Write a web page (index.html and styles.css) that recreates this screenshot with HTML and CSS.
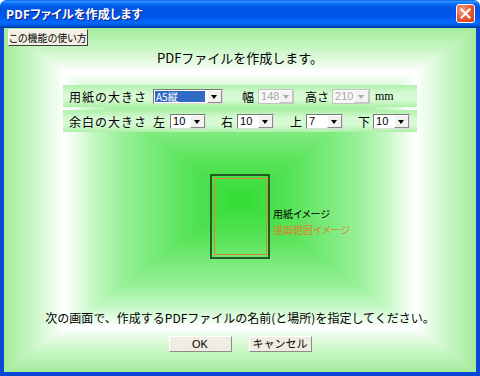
FILE: index.html
```html
<!DOCTYPE html>
<html>

<head>
  <link rel="stylesheet" href="styles.css">
</head>

<body>

  <div class="window">
    <div class="titlebar">
      <span class="title">PDFファイルを作成します</span>
      <span class="close">
        <svg width="11" height="11" viewBox="0 0 11 11">
          <path d="M1.5 1.5 L9.5 9.5 M9.5 1.5 L1.5 9.5" stroke="#fff" stroke-width="2" stroke-linecap="square" />
        </svg>
      </span>
    </div>

    <div class="client">
      <div class="content">
        <button class="help">この機能の使い方</button>
        <p class="heading">PDFファイルを作成します。</p>

        <div class="rows">
          <div class="row">
            <span class="label">用紙の大きさ</span>
            <span class="sel w70"><span class="sel-text picked">A5縦</span><span class="sel-btn"></span></span>
            <span class="key k-wide">幅</span>
            <span class="sel w36 off"><span class="sel-text">148</span><span class="sel-btn"></span></span>
            <span class="key k-high">高さ</span>
            <span class="sel w38 off"><span class="sel-text">210</span><span class="sel-btn"></span></span>
            <span class="unit">mm</span>
          </div>
          <div class="row">
            <span class="label">余白の大きさ</span>
            <span class="key k-first">左</span>
            <span class="sel w36"><span class="sel-text">10</span><span class="sel-btn"></span></span>
            <span class="key">右</span>
            <span class="sel w37"><span class="sel-text">10</span><span class="sel-btn"></span></span>
            <span class="key k-top">上</span>
            <span class="sel w37"><span class="sel-text">7</span><span class="sel-btn"></span></span>
            <span class="key k-last">下</span>
            <span class="sel w37"><span class="sel-text">10</span><span class="sel-btn"></span></span>
          </div>
        </div>

        <div class="preview">
          <div class="paper">
            <div class="area"></div>
          </div>
          <div class="legend">
            <span class="legend-paper">用紙イメージ</span>
            <span class="legend-area">描画範囲イメージ</span>
          </div>
        </div>

        <p class="note">次の画面で、作成するPDFファイルの名前(と場所)を指定してください。</p>

        <div class="actions">
          <button class="btn">OK</button>
          <button class="btn">キャンセル</button>
        </div>
      </div>
    </div>
  </div>

</body>

</html>
```

FILE: styles.css
```css
* {
  box-sizing: border-box;
}

body {
  margin: 0;
  background: #fff;
  font-family: "Noto Sans CJK JP", "Liberation Sans", sans-serif;
  font-size: 12px;
  color: #000;
}

.window {
  width: 480px;
  height: 376px;
  display: flex;
  flex-direction: column;
}

/* title bar */
.titlebar {
  height: 28px;
  display: flex;
  align-items: center;
  justify-content: space-between;
  padding: 0 5px 2px 6px;
  border-radius: 6px 6px 0 0;
  background: linear-gradient(to bottom, #0058ee 0%, #3593ff 5%, #1d83ff 9%, #036ffc 13%, #0262ee 18%, #0057e5 26%, #0054e3 40%, #0055eb 58%, #005bf5 68%, #026afe 78%, #0062ef 87%, #0052d6 93%, #0040ab 97%, #003092 100%);
}

.title {
  color: #fff;
  font-weight: bold;
  font-size: 12px;
  font-feature-settings: "palt";
  letter-spacing: 0.2px;
  text-shadow: 1px 1px #0f1f80;
}

.close {
  width: 19px;
  height: 19px;
  display: flex;
  align-items: center;
  justify-content: center;
  border: 1px solid #fff;
  border-radius: 3px;
  background: radial-gradient(circle at 30% 30%, #f39a7c, #e2532e 60%, #c8401e);
}

/* client area with a box shaped gradient */
.client {
  position: relative;
  flex: 1;
  border: 4px solid #0b48d8;
  border-top: 0;
  background: linear-gradient(to right, #a4ec9c 0%, #c8f6c4 6%, #fff 13%, #c4f8c4 19%, #98f098 25%, #5ce45c 38%, #30dc30 50%, #5ce45c 62%, #98f098 75%, #c4f8c4 81%, #fff 87%, #c8f6c4 94%, #a4ec9c 100%);
}

.client::before {
  content: "";
  position: absolute;
  inset: 0;
  background: linear-gradient(to bottom, #a4ec9c 0%, #c8f6c4 6%, #fff 13%, #c4f8c4 19%, #98f098 25%, #5ce45c 38%, #30dc30 50%, #5ce45c 62%, #98f098 75%, #c4f8c4 81%, #fff 87%, #c8f6c4 94%, #a4ec9c 100%);
  -webkit-mask-image: conic-gradient(from 0deg at 50% 50%, #000 0deg 53.9deg, transparent 53.9deg 126.1deg, #000 126.1deg 233.9deg, transparent 233.9deg 306.1deg, #000 306.1deg);
  mask-image: conic-gradient(from 0deg at 50% 50%, #000 0deg 53.9deg, transparent 53.9deg 126.1deg, #000 126.1deg 233.9deg, transparent 233.9deg 306.1deg, #000 306.1deg);
}

.content {
  position: relative;
  height: 100%;
  display: flex;
  flex-direction: column;
  align-items: center;
}

.help {
  align-self: flex-start;
  margin: 1px 0 0 4px;
  width: 80px;
  height: 17px;
  padding: 0;
  white-space: nowrap;
  font-family: "Noto Sans CJK JP", sans-serif;
  font-size: 10px;
  font-feature-settings: "palt";
  line-height: 14px;
  color: #000;
  background: #f4f1e4;
  border: 1px solid;
  border-color: #fff #404040 #404040 #fff;
}

.heading {
  margin: 4px 0 0;
  font-size: 13px;
  line-height: 16px;
}

/* option rows */
.rows {
  margin-top: 19px;
  width: 354px;
  display: flex;
  flex-direction: column;
  gap: 3px;
}

.row {
  height: 22px;
  display: flex;
  align-items: center;
  padding-left: 6px;
  background: linear-gradient(to bottom, #aef0a8, #d4f9d0 35%, #d8fad6 65%, #aef0a8);
}

.label {
  width: 84px;
  letter-spacing: 1px;
}

.key {
  margin: 0 4px 0 15px;
}

.k-wide {
  margin-left: 19px;
}

.k-high {
  margin: 0 3px 0 11px;
}

.k-first {
  margin: 0 5px 0 0;
}

.k-top {
  margin-left: 16px;
}

.k-last {
  margin-right: 3px;
}

.unit {
  margin-left: 5px;
  font-family: "Liberation Serif", serif;
  font-size: 12px;
}

/* drop down boxes */
.sel {
  display: inline-flex;
  height: 15px;
  border: 1px solid;
  border-color: #7a7a7a #dcdcdc #dcdcdc #7a7a7a;
  background: #fff;
  font-family: "Liberation Sans", "Noto Sans CJK JP", sans-serif;
  font-size: 11px;
}

.w70 { width: 70px; }
.w36 { width: 36px; }
.w37 { width: 37px; }
.w38 { width: 38px; }

.sel-text {
  flex: 1;
  padding-left: 2px;
  line-height: 13px;
}

.picked {
  margin: 1px 2px 1px 1px;
  padding-left: 1px;
  line-height: 11px;
  background: #316ac5;
  color: #fff;
  font-family: "Noto Sans CJK JP", sans-serif;
  font-size: 10px;
}

.sel-btn {
  position: relative;
  width: 15px;
  background: #f2f2ee;
  border: 1px solid;
  border-color: #fff #8a8a8a #8a8a8a #fff;
}

.sel-btn::after {
  content: "";
  position: absolute;
  left: 3px;
  top: 4px;
  border-style: solid;
  border-width: 4px 3.5px 0;
  border-color: #000 transparent transparent;
}

.off {
  border-color: #c4c4c4;
  background: #f8f8f6;
  color: #a9a9a9;
}

.off .sel-btn {
  border-color: #fff #c4c4c4 #c4c4c4 #fff;
}

.off .sel-btn::after {
  border-top-color: #a9a9a9;
}

/* paper image */
.preview {
  margin-top: 42px;
  width: 100%;
  display: grid;
  grid-template-columns: 1fr 60px 1fr;
}

.paper {
  grid-column: 2;
  height: 85px;
  display: flex;
  border: 2px solid #285a28;
}

.area {
  flex: 1;
  margin: 2px 1px 2px 2px;
  border: 1px solid #d08a30;
}

.legend {
  display: flex;
  flex-direction: column;
  padding: 32px 0 0 3px;
  font-size: 10px;
  font-feature-settings: "palt";
  line-height: 16px;
}

.legend-area {
  color: #d6882c;
}

.note {
  margin: 51px 0 0;
  line-height: 16px;
}

.actions {
  margin-top: 10px;
  display: flex;
  gap: 17px;
}

.btn {
  width: 63px;
  height: 16px;
  padding: 0;
  font-family: "Liberation Sans", "Noto Sans CJK JP", sans-serif;
  font-size: 11px;
  line-height: 13px;
  color: #000;
  background: #efede2;
  border: 1px solid;
  border-color: #fff #8c8c8c #8c8c8c #fff;
}
```
